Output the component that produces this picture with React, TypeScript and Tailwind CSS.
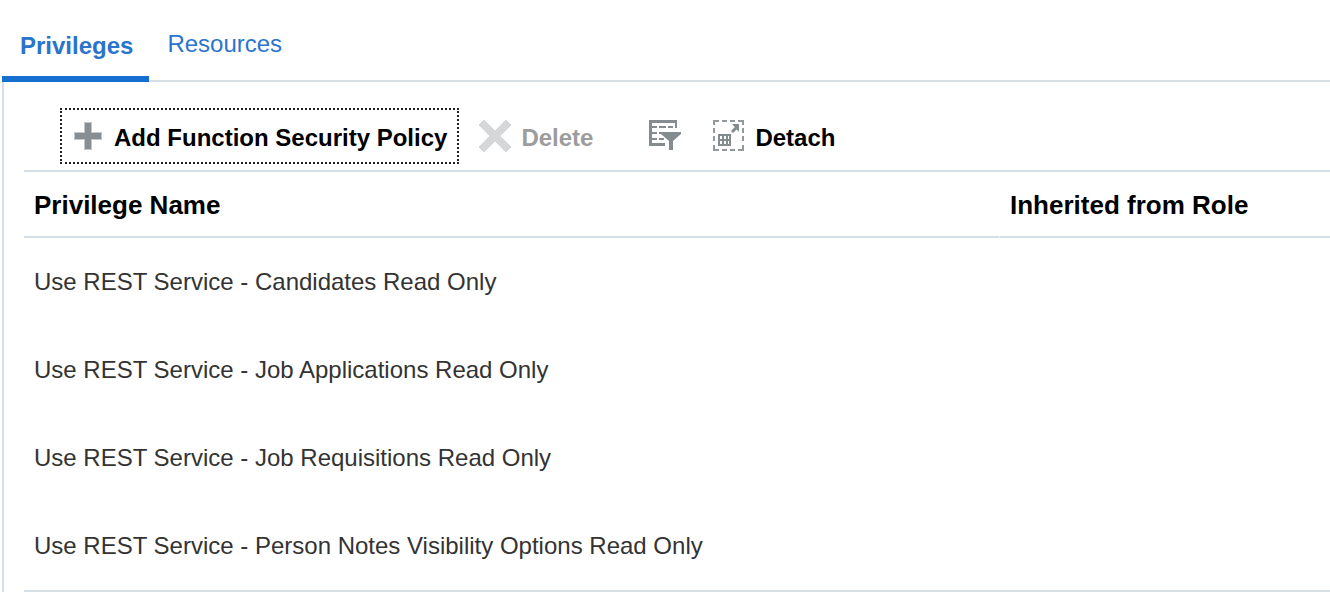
import type { ReactNode } from "react";

const privileges = [
  "Use REST Service - Candidates Read Only",
  "Use REST Service - Job Applications Read Only",
  "Use REST Service - Job Requisitions Read Only",
  "Use REST Service - Person Notes Visibility Options Read Only",
];

function PlusIcon() {
  return (
    <svg className="size-8 shrink-0" viewBox="0 0 32 32" aria-hidden="true">
      <path d="M12 2h8v10h10v8H20v10h-8V20H2v-8h10z" fill="#c3c7c9" />
      <path d="M13 3h6v10h10v6H19v10h-6V19H3v-6h10z" fill="#878d91" />
    </svg>
  );
}

function DeleteIcon() {
  return (
    <svg className="size-8 shrink-0" viewBox="0 0 32 32" aria-hidden="true">
      <path
        d="M5 0 16 11 27 0 32 5 21 16 32 27 27 32 16 21 5 32 0 27 11 16 0 5z"
        fill="#d5d7d9"
        stroke="#d5d7d9"
        strokeWidth="1"
        strokeLinejoin="round"
      />
    </svg>
  );
}

function FilterIcon() {
  return (
    <svg className="size-8 shrink-0" viewBox="0 0 32 32" fill="#858c90" aria-hidden="true">
      <path d="M0 0h28v8h-2V3H3v20h13v3H0z" />
      <path d="M3 6h5v2H3zM10 6h7v2h-7zM19 6h5v2h-5zM3 12h5v2H3zM10 12h2v2h-2zM3 18h5v2H3zM10 18h5v2h-5z" />
      <path d="M12 12h20v2l-8 7v9h-4v-9l-8-7z" />
    </svg>
  );
}

function DetachIcon() {
  return (
    <svg className="size-8 shrink-0" viewBox="0 0 32 32" fill="none" aria-hidden="true">
      <path
        d="M1 5V1h5M9 1h5M17 1h5M25 1h5v4M30 25v5h-5M6 30H1v-5M9 30h5M17 30h5M1 8v5M1 16v5M30 8v5M30 16v5"
        stroke="#92989b"
        strokeWidth="2"
      />
      <path
        fillRule="evenodd"
        d="M5 14h13v12H5zM7 16v3h2v-3zM11 16v3h2v-3zM15 16v3h1v-3zM7 21v3h2v-3zM11 21v3h2v-3zM15 21v3h1v-3z"
        fill="#858c90"
      />
      <path d="m19 12 5-5" stroke="#858c90" strokeWidth="3" />
      <path d="M19 4h7v8z" fill="#858c90" />
    </svg>
  );
}

function ToolbarButton({
  icon,
  children,
  className,
  disabled,
}: {
  icon: ReactNode;
  children: ReactNode;
  className: string;
  disabled?: boolean;
}) {
  return (
    <button
      type="button"
      disabled={disabled}
      className={`flex h-14 items-center gap-2.5 whitespace-nowrap text-2xl font-bold ${className}`}
    >
      {icon}
      <span className="pt-1">{children}</span>
    </button>
  );
}

export default function App() {
  return (
    <main className="bg-white pl-0.5 font-['Liberation_Sans',Arial,sans-serif] text-2xl text-[#333]">
      <nav className="flex h-[82px] items-stretch text-[#2a74cc]" aria-label="Policy types">
        <a
          href="#privileges"
          aria-current="page"
          className="flex items-center border-b-6 border-[#146fd0] pt-4 pr-4 pl-[18px] font-bold"
        >
          Privileges
        </a>
        <a href="#resources" className="flex grow items-center border-b-2 border-[#d6dfe6] px-[18px] pt-2">
          Resources
        </a>
      </nav>

      <section className="border-l-2 border-[#d6dfe6] pl-5">
        <div className="flex h-[88px] items-center pt-5 pl-9">
          <ToolbarButton
            icon={<PlusIcon />}
            className="border-2 border-dotted border-[#222] px-2.5 text-black"
          >
            Add Function Security Policy
          </ToolbarButton>
          <ToolbarButton icon={<DeleteIcon />} className="ml-5 text-[#9c9c9c]" disabled>
            Delete
          </ToolbarButton>
          <button type="button" aria-label="Query by Example" className="ml-14">
            <FilterIcon />
          </button>
          <ToolbarButton icon={<DetachIcon />} className="ml-8 text-black">
            Detach
          </ToolbarButton>
        </div>

        <table className="w-full table-fixed border-separate border-spacing-0 border-y-2 border-[#d6dfe6] text-left">
          <thead>
            <tr className="h-[66px] text-[26px] text-black">
              <th
                scope="col"
                className="w-[976px] border-r border-b-2 border-r-white border-b-[#d6dfe6] p-0 pt-0.5 pl-2.5 font-bold"
              >
                Privilege Name
              </th>
              <th scope="col" className="border-b-2 border-[#d6dfe6] p-0 pt-0.5 pl-2.5 font-bold">
                Inherited from Role
              </th>
            </tr>
          </thead>
          <tbody>
            {privileges.map((name) => (
              <tr key={name} className="h-22">
                <td className="p-0 pl-2.5">{name}</td>
                <td className="p-0 pl-2.5" />
              </tr>
            ))}
          </tbody>
        </table>
      </section>
    </main>
  );
}
